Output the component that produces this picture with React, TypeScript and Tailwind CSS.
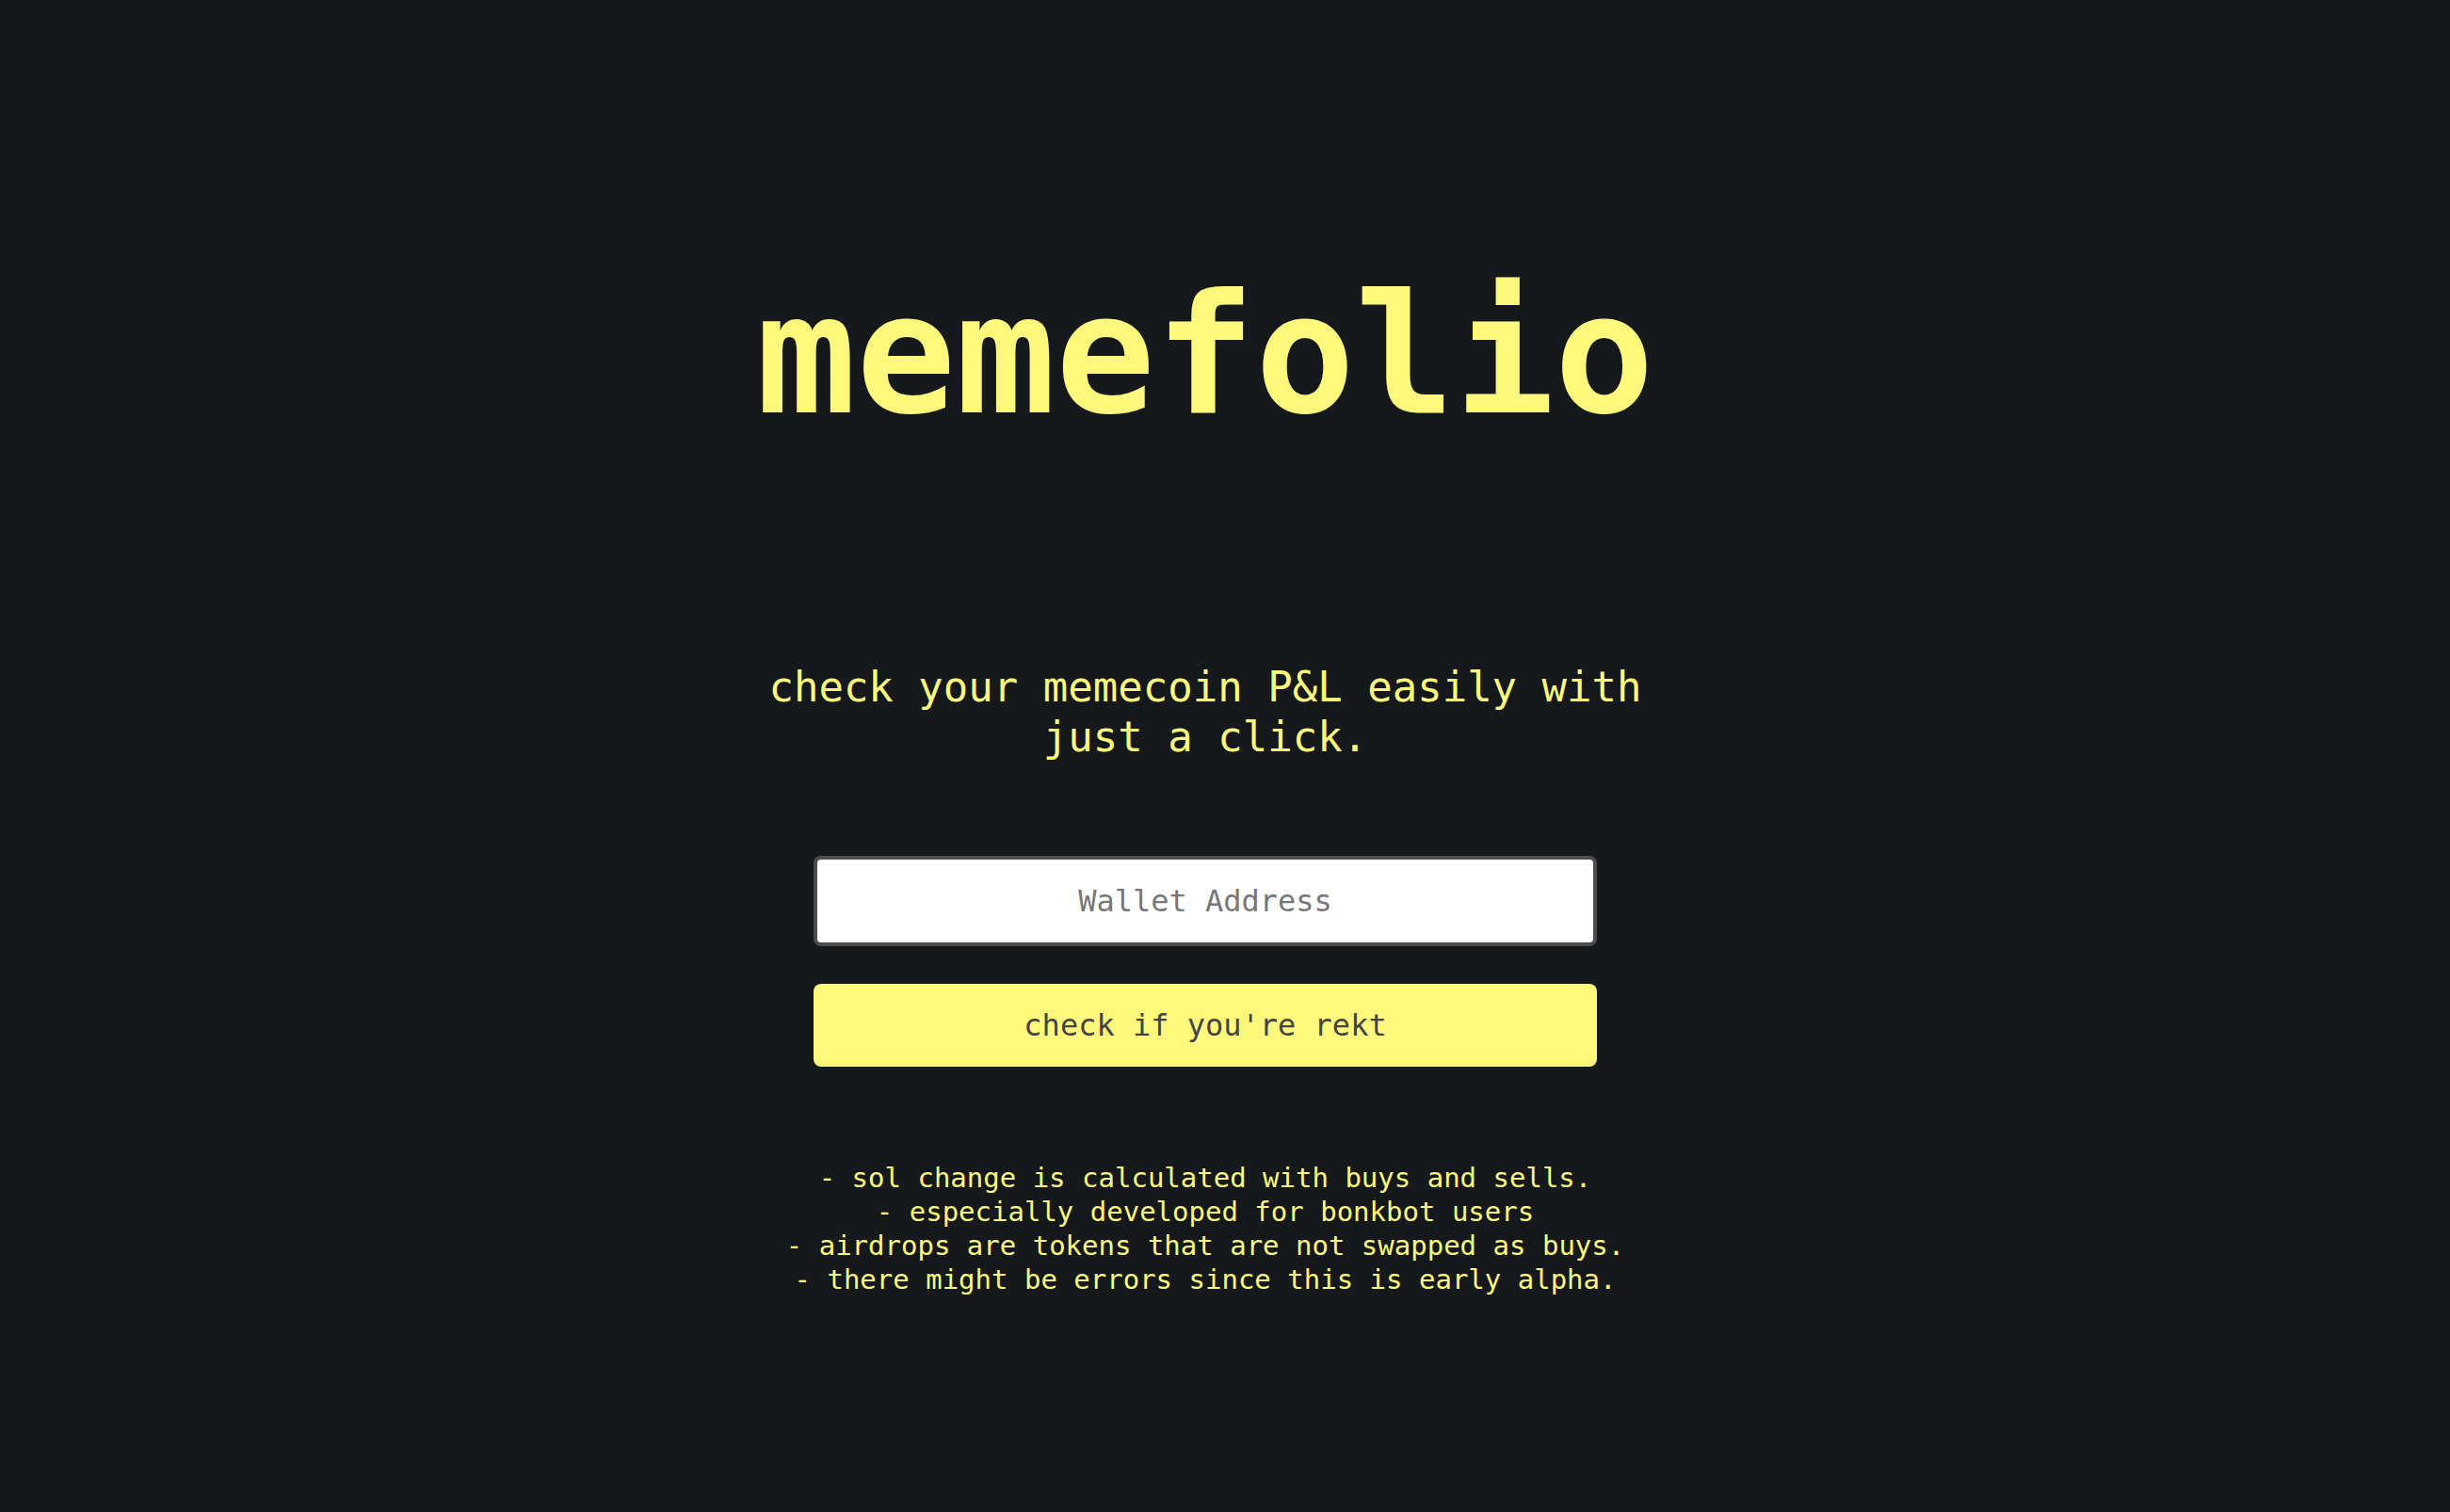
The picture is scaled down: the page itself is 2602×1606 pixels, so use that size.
export default function App() {
  const notes = [
    "- sol change is calculated with buys and sells.",
    "- especially developed for bonkbot users",
    "- airdrops are tokens that are not swapped as buys.",
    "- there might be errors since this is early alpha.",
  ];

  return (
    <div className="min-h-screen w-full bg-[#15191c] text-[#fef97d] font-['DejaVu_Sans_Mono','Liberation_Mono',monospace] pr-[42px]">
      <div className="flex flex-col items-center pt-[268px]">
        {/* Title */}
        <h1 className="text-[176px] leading-[220px] font-bold">memefolio</h1>

        {/* Tagline */}
        <p className="mt-[215px] w-[980px] text-center text-[44px] leading-[53px]">
          check your memecoin P&amp;L easily with just a click.
        </p>

        {/* Wallet form */}
        <div className="mt-[100px] flex flex-col gap-[40px] w-[832px]">
          <input
            type="text"
            placeholder="Wallet Address"
            className="h-[96px] w-full rounded-[8px] border-4 border-[#4d4d4d] bg-white text-center text-[32px] text-[#333] placeholder:text-[#777] outline-none"
          />
          <button className="h-[88px] w-full rounded-[8px] bg-[#fef97d] text-[32px] text-[#444]">
            check if you're rekt
          </button>
        </div>

        {/* Notes */}
        <div className="mt-[100px] flex flex-col items-center text-[29px] leading-[36px]">
          {notes.map((n) => (
            <p key={n}>{n}</p>
          ))}
        </div>
      </div>
    </div>
  );
}
